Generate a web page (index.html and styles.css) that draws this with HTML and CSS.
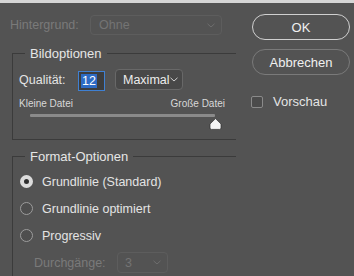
FILE: index.html
```html
<!DOCTYPE html>
<html lang="de">
<head>
<meta charset="utf-8">
<link rel="stylesheet" href="styles.css">
</head>
<body>
<div class="topbar"></div>
<div class="dialog">
  <div class="left">
    <div class="row bg-row">
      <span class="label disabled lbl-bg">Hintergrund:</span>
      <div class="select select-wide disabled-select">
        <span>Ohne</span>
        <svg class="chev" width="8" height="5" viewBox="0 0 8 5"><path d="M0.5 0.8 L4 4 L7.5 0.8" fill="none" stroke="#6e6e6e" stroke-width="1"/></svg>
      </div>
    </div>

    <div class="group group1">
      <div class="legend">Bildoptionen</div>
      <div class="row q-row">
        <span class="label lbl-q">Qualität:</span>
        <div class="num"><span class="sel">12</span></div>
        <div class="select select-max">
          <span>Maximal</span>
          <svg class="chev" width="8" height="5" viewBox="0 0 8 5"><path d="M0.5 0.8 L4 4 L7.5 0.8" fill="none" stroke="#cfcfcf" stroke-width="1"/></svg>
        </div>
      </div>
      <div class="slider-labels">
        <span>Kleine Datei</span>
        <span>Große Datei</span>
      </div>
      <div class="slider">
        <div class="track"></div>
        <svg class="thumb" width="13" height="12" viewBox="0 0 13 12"><path d="M6.5 0.6 L12 6 L12 10 Q12 11.4 10.6 11.4 L2.4 11.4 Q1 11.4 1 10 L1 6 Z" fill="#f6f6f6" stroke="#2e2e2e" stroke-width="0.7"/></svg>
      </div>
    </div>

    <div class="group group2">
      <div class="legend">Format-Optionen</div>
      <div class="radios">
        <div class="radio-row"><span class="radio on"></span><span class="label">Grundlinie (Standard)</span></div>
        <div class="radio-row"><span class="radio"></span><span class="label">Grundlinie optimiert</span></div>
        <div class="radio-row"><span class="radio"></span><span class="label">Progressiv</span></div>
      </div>
      <div class="row pass-row">
        <span class="label disabled lbl-pass">Durchgänge:</span>
        <div class="select select-pass disabled-select">
          <span>3</span>
          <svg class="chev" width="8" height="5" viewBox="0 0 8 5"><path d="M0.5 0.8 L4 4 L7.5 0.8" fill="none" stroke="#6e6e6e" stroke-width="1"/></svg>
        </div>
      </div>
    </div>
  </div>

  <div class="right">
    <button class="btn btn-ok">OK</button>
    <button class="btn btn-cancel">Abbrechen</button>
    <label class="check-row"><span class="checkbox"></span><span class="label">Vorschau</span></label>
  </div>
</div>
</body>
</html>
```
FILE: styles.css
```css
* { box-sizing: border-box; }
html, body {
  margin: 0;
  padding: 0;
  width: 354px;
  height: 276px;
  overflow: hidden;
  background: #535353;
  font-family: "Liberation Sans", Arial, sans-serif;
  font-size: 12.5px;
  color: #e4e4e4;
}
.topbar {
  height: 3px;
  background: #d6d6d6;
}
.dialog {
  display: flex;
}
.left {
  width: 240px;
  flex: none;
  padding-top: 12px;
}
.row {
  display: flex;
  align-items: center;
}
.label { white-space: nowrap; }
.disabled { color: #7a7a7a; }
.bg-row {
  height: 20px;
  padding-left: 10px;
}
.lbl-bg { width: 80px; }
.select {
  display: flex;
  align-items: center;
  justify-content: space-between;
  border-radius: 4px;
  border: 1px solid #626262;
  background: #4c4c4c;
  padding: 0 6px 0 8px;
}
.disabled-select {
  background: #535353;
  border-color: #5d5d5d;
  color: #747474;
}
.select-wide {
  width: 132px;
  height: 20px;
}
.group {
  margin-left: 12px;
  width: 224px;
  border-top: 1px solid #3b3b3b;
  border-left: 1px solid #3b3b3b;
}
.legend {
  display: block;
  width: max-content;
  background: #535353;
  color: #e6e6e6;
  font-size: 13px;
  line-height: 17px;
  padding: 0 5px;
  margin-top: -9px;
}
.group1 {
  margin-top: 18px;
  height: 87px;
  border-bottom: 1px solid #3b3b3b;
  padding-left: 6px;
}
.group1 .legend { margin-left: 6px; }
.q-row {
  margin-top: 7px;
  height: 22px;
  align-items: flex-start;
}
.lbl-q {
  width: 59px;
  line-height: 22px;
}
.num {
  margin-top: 2px;
  width: 27px;
  height: 20px;
  border: 1px solid #3f80d2;
  background: #3d3d3d;
  padding: 0 0 0 2px;
  display: flex;
  align-items: center;
}
.sel {
  background: #2d6bc4;
  color: #ffffff;
  line-height: 14px;
  padding: 0 1px;
}
.select-max {
  margin-left: 10px;
  width: 68px;
  height: 21px;
  background: #484848;
  border-color: #686868;
  color: #ececec;
  padding: 0 4px 0 7px;
}
.slider-labels {
  display: flex;
  justify-content: space-between;
  width: 206px;
  margin-top: 7px;
  font-size: 10px;
  line-height: 12px;
  color: #d8d8d8;
}
.slider {
  position: relative;
  margin-left: 11px;
  margin-top: 4px;
  width: 185px;
  height: 3px;
}
.track {
  height: 3px;
  width: 185px;
  background: #8a8a8a;
  border-radius: 1px;
}
.thumb {
  position: absolute;
  left: 179px;
  top: 4px;
}
.group2 {
  margin-top: 16px;
  height: 130px;
  padding-left: 7px;
}
.group2 .legend { margin-left: 5px; }
.radios { margin-top: 3px; }
.radio-row {
  display: flex;
  align-items: center;
  height: 27px;
}
.radio {
  width: 13px;
  height: 13px;
  border-radius: 50%;
  border: 1px solid #9c9c9c;
  background: #4e4e4e;
  margin-right: 9px;
  flex: none;
}
.radio.on {
  border: 4px solid #dcdcdc;
  background: #2f2f2f;
}
.pass-row {
  height: 21px;
  margin-top: 3px;
  padding-left: 14px;
}
.lbl-pass { width: 83px; }
.select-pass {
  width: 51px;
  height: 21px;
  padding-left: 7px;
}
.right {
  padding-top: 11px;
  padding-left: 11px;
  display: flex;
  flex-direction: column;
  align-items: flex-start;
  width: 114px;
}
.btn {
  font-family: inherit;
  font-size: 13px;
  margin-left: 1px;
  width: 98px;
  height: 26px;
  border-radius: 13px;
  background: transparent;
  color: #f0f0f0;
  padding: 0;
}
.btn-ok {
  border: 1.5px solid #d0d0d0;
}
.btn-cancel {
  margin-top: 9px;
  border: 1px solid #7a7a7a;
}
.check-row {
  display: flex;
  align-items: center;
  margin-top: 19px;
  font-size: 13px;
}
.checkbox {
  width: 12px;
  height: 12px;
  border: 1px solid #8a8a8a;
  border-radius: 2px;
  background: #4b4b4b;
  margin-right: 10px;
}
```
